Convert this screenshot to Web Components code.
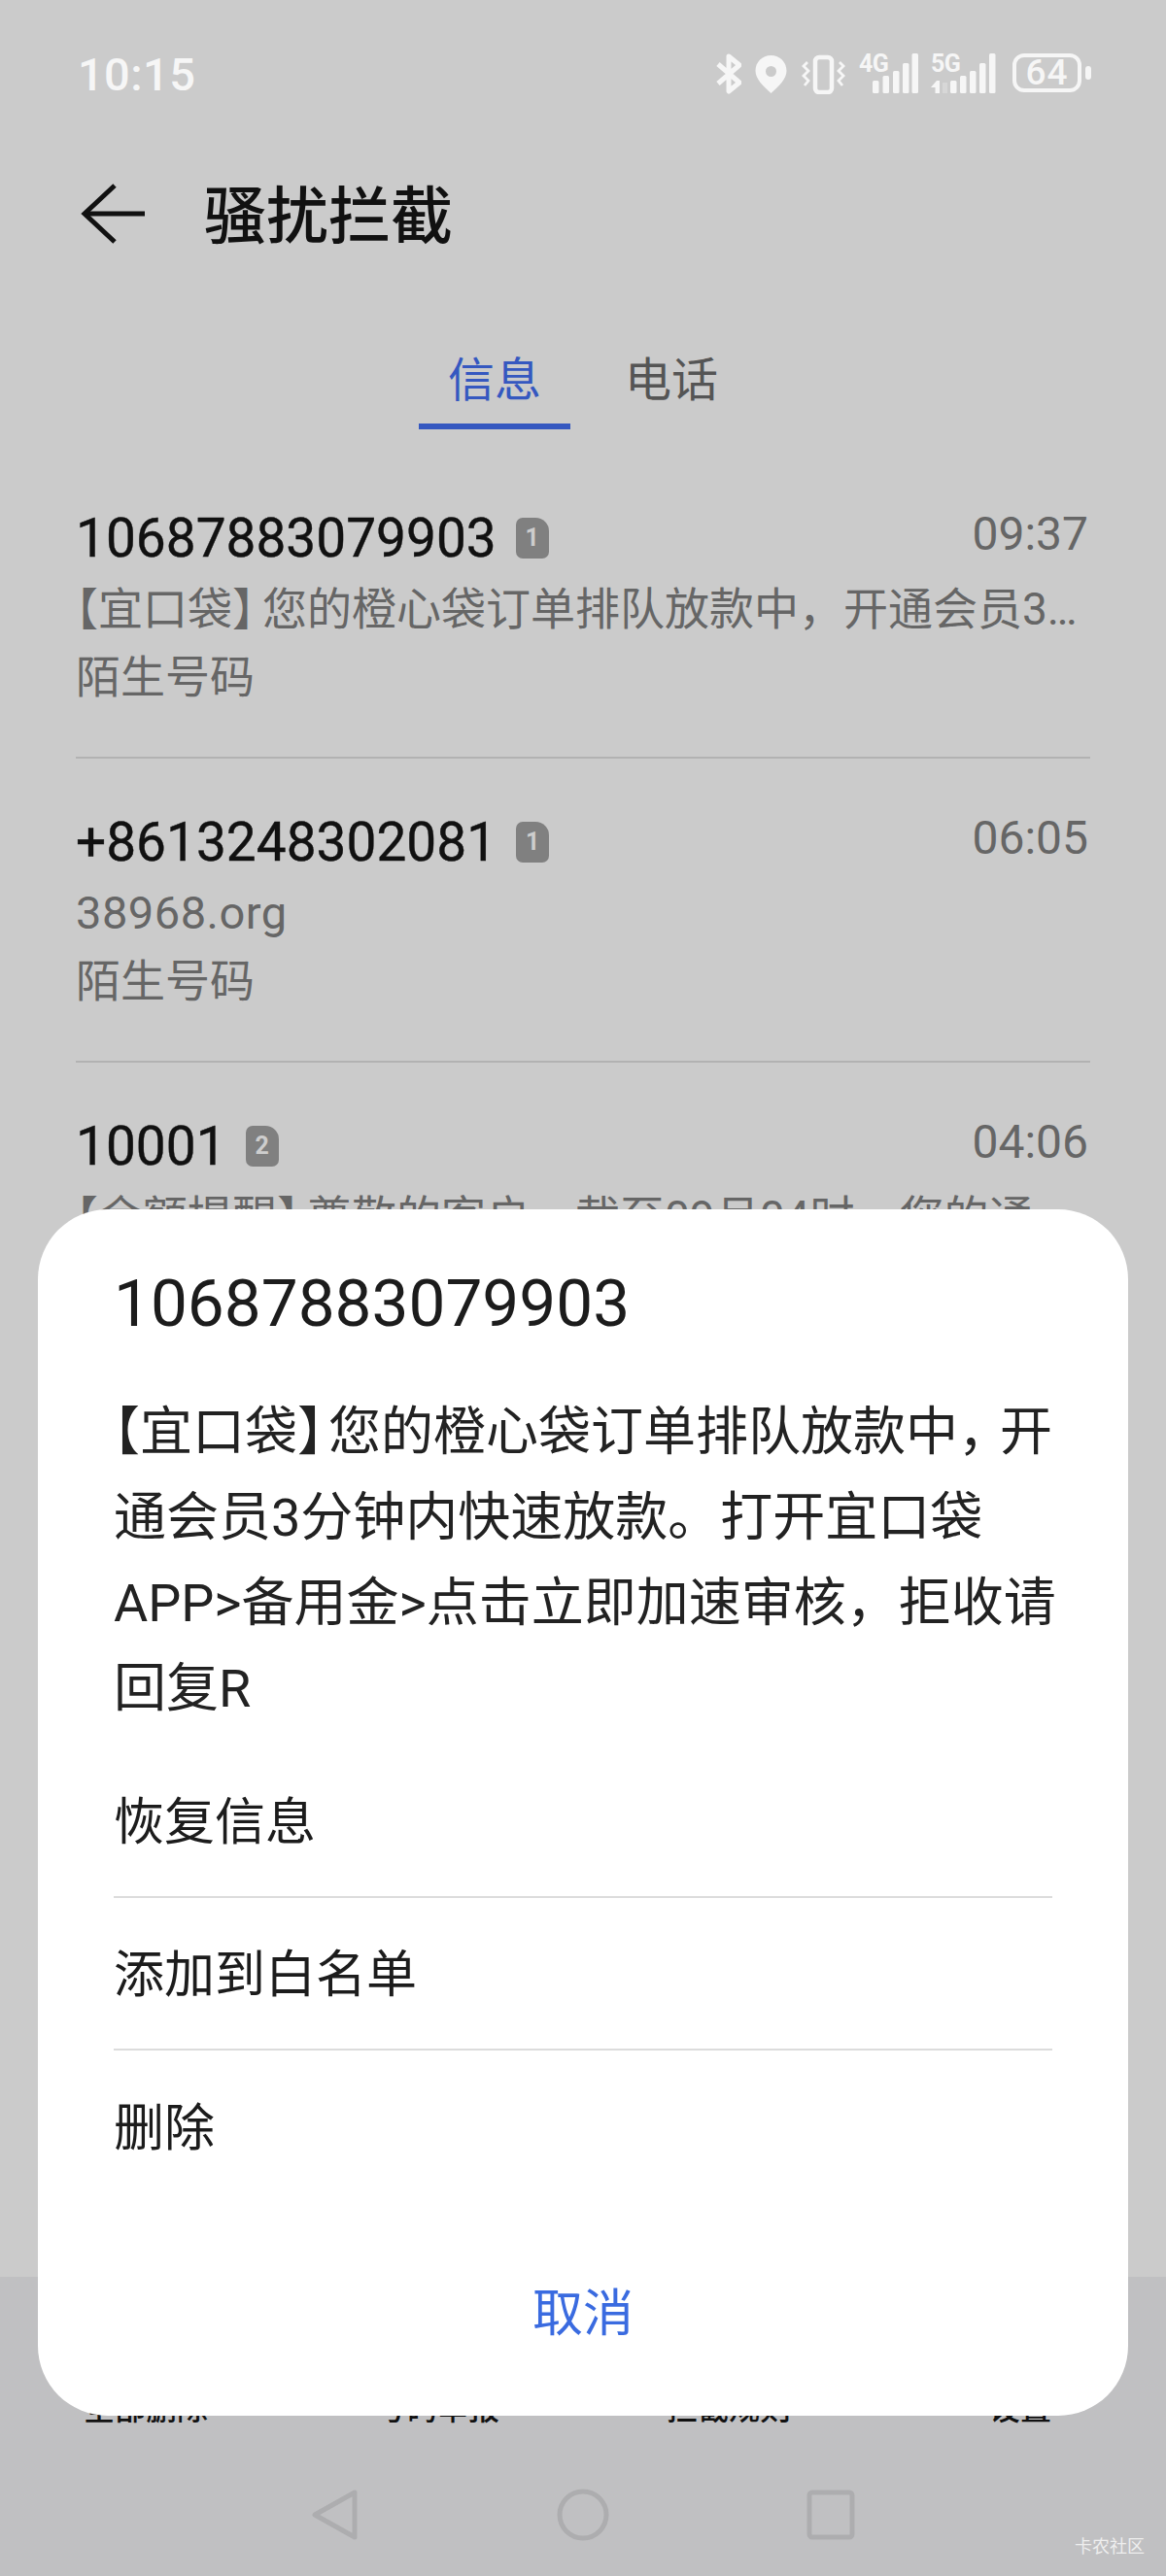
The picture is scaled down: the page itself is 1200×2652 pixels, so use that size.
<!DOCTYPE html>
<html lang="zh-CN"><head><meta charset="utf-8"><title>骚扰拦截</title>
<style>
html,body{margin:0;padding:0;background:#cbcbcb}
body{font-family:Roboto,"Noto Sans CJK SC",sans-serif;width:1200px;height:2652px;overflow:hidden}
message-row .ob,action-sheet .ob{font-feature-settings:"halt"}
message-row .cb{font-feature-settings:"halt";padding-right:8px}
message-row .lat{font-size:47px;letter-spacing:.5px}
action-sheet .cb{font-feature-settings:"halt";padding-right:5px}
action-sheet .cm{font-feature-settings:"halt";padding-right:16px}
action-sheet .ln{display:block;white-space:nowrap}
</style></head><body>
<blocked-screen>
  <status-bar slot="top"></status-bar>
  <app-header slot="top">骚扰拦截</app-header>
  <tab-strip slot="top"></tab-strip>
  <message-row name="10687883079903" badge="1" time="09:37" tag="陌生号码"><span class="ob">【</span>宜口袋<span class="cb">】</span>您的橙心袋订单排队放款中，开通会员3…</message-row>
  <message-row name="+8613248302081" badge="1" time="06:05" tag="陌生号码"><span class="lat">38968.org</span></message-row>
  <message-row name="10001" badge="2" time="04:06" tag="陌生号码"><span class="ob">【</span>余额提醒<span class="cb">】</span>尊敬的客户，截至09月04时，您的通…</message-row>
  <bottom-bar slot="bottom"></bottom-bar>
  <action-sheet slot="over" title="10687883079903"><span class="ln"><span class="ob">【</span>宜口袋<span class="cb">】</span>您的橙心袋订单排队放款中<span class="cm">，</span>开</span><span class="ln">通会员3分钟内快速放款。打开宜口袋</span><span class="ln">APP&gt;备用金&gt;点击立即加速审核，拒收请</span><span class="ln">回复R</span></action-sheet>
</blocked-screen>
<script>
function def(name, css, html){
  customElements.define(name, class extends HTMLElement{
    connectedCallback(){
      if(this.shadowRoot) return;
      const r=this.attachShadow({mode:'open'});
      const h=typeof html==='function'?html(this):html;
      r.innerHTML='<style>'+css+'</style>'+h;
    }
  });
}
def('blocked-screen',`
:host{display:block;position:relative;width:1200px;height:2652px;overflow:hidden;background:#cbcbcb}
.col{display:flex;flex-direction:column;height:2652px}
.list{display:block;padding-top:26px;height:1902px;overflow:hidden;box-sizing:border-box}
`,`<div class="col"><slot name="top"></slot><div class="list"><slot></slot></div><slot name="bottom"></slot></div><slot name="over"></slot>`);

def('status-bar',`
:host{display:flex;justify-content:space-between;align-items:flex-start;box-sizing:border-box;height:165px;padding:55px 77px 0 80px;color:#f6f6f6}
.time{font:500 47px/44px Roboto,sans-serif;letter-spacing:.4px}
.icons{display:flex;align-items:flex-start;font-family:Roboto,sans-serif}
svg{display:block}
.net{position:relative;display:block}
.net b{position:absolute;left:0;top:0;font:700 25px/22px Roboto,sans-serif;letter-spacing:-.5px}
.bat{display:flex;align-items:center;gap:4px;margin-left:17px}
.shell{box-sizing:border-box;width:71px;height:40px;border:4px solid #f6f6f6;border-radius:12px;display:flex;align-items:center;justify-content:center;font:500 37px/32px Roboto,sans-serif;letter-spacing:1px}
.tip{width:6px;height:14px;border-radius:3px;background:#f6f6f6}
`,()=>{
 const bars=(xs)=>{const ys=[28,23,18,10,0];return xs.map((x,i)=>`<rect x="${x}" y="${ys[i]}" width="6.5" height="${41-ys[i]}" rx="1.5" fill="#f6f6f6"/>`).join('')};
 return `<span class="time">10:15</span><div class="icons">
 <svg style="margin-right:14px" width="26" height="42" viewBox="0 0 26 42" fill="none" stroke="#f6f6f6" stroke-width="5" stroke-linejoin="round"><path d="M2 11 L24 30 L13 39 V3 L24 12 L2 31"/></svg>
 <svg style="margin-right:15px" width="33" height="42" viewBox="0 0 33 42"><path fill="#f6f6f6" fill-rule="evenodd" d="M16.5 2C7.5 2 0.5 8.800 0.500 18c0 8 8 16 16 23 8-7 16-15 16-23C32.500 8.800 25.500 2 16.500 2Zm0 11a5.500 5.500 0 1 1 0 11a5.500 5.500 0 0 1 0-11Z"/></svg>
 <svg style="margin-right:14px" width="45" height="42" viewBox="0 0 45 42" fill="none" stroke="#f6f6f6"><rect x="14" y="4" width="17" height="36" rx="4" stroke-width="4.500"/><path stroke-width="2.800" d="M6 9 L2 13 L7 18 L2 23 L7 28 L3 33"/><path stroke-width="2.800" d="M39 9 L43 13 L38 18 L43 23 L38 28 L42 33"/></svg>
 <span class="net" style="margin-right:13px;width:61px;height:42px"><b>4G</b><svg width="61" height="42" viewBox="0 0 61 42">${bars([14,24.5,35,45,54.5])}</svg></span>
 <span class="net" style="width:67px;height:42px"><b>5G</b><svg width="67" height="42" viewBox="0 0 67 42"><path fill="#f6f6f6" d="M6 28 L0 35 H4.500 V41 H9 V28Z"/><rect x="12" y="30" width="5" height="11" fill="#f6f6f6" opacity=".3"/>${bars([20,30,40,50,60])}</svg></span>
 <span class="bat"><span class="shell">64</span><span class="tip"></span></span>
 </div>`;
});

def('app-header',`
:host{display:flex;align-items:center;box-sizing:border-box;height:110px;padding-left:83px;color:#111}
svg{display:block;margin-right:55px}
.t{font:500 64px/80px "Noto Sans CJK SC",sans-serif;padding-bottom:6px}
`,`<svg width="72" height="64" viewBox="0 0 72 64" fill="none" stroke="#111" stroke-width="5"><path d="M35 3 L4 32 L35 61" stroke-linejoin="miter"/><path d="M4 32 H66"/></svg><span class="t"><slot></slot></span>`);

def('tab-strip',`
:host{display:flex;justify-content:center;gap:26px;align-items:flex-end;box-sizing:border-box;height:167px;font:400 48px/60px "Noto Sans CJK SC",sans-serif;color:#555}
.tab{width:156px;text-align:center;box-sizing:border-box;height:85px;border-bottom:6px solid transparent}
.on{color:#3558c0;border-color:#3558c0}
`,`<div class="tab on">信息</div><div class="tab">电话</div>`);

def('message-row',`
:host{display:block;box-sizing:border-box;height:313px;margin:0 78px;padding:56px 2px 0 0;border-bottom:2px solid #b2b2b2;color:#666}
.top{display:flex;justify-content:space-between;align-items:flex-start;height:60px}
.n{display:flex;align-items:center;color:#111;font:400 55px/60px Roboto,sans-serif;-webkit-text-stroke:.4px #111}
.badge{margin-left:20px;width:34px;height:42px;border-radius:7px 14px 7px 7px;background:#808080;color:#cdcdcd;font:700 25px/42px Roboto,sans-serif;text-align:center;-webkit-text-stroke:0}
.time{font:400 48px/52px Roboto,sans-serif}
.p{margin-top:8px;font:400 46px/70px Roboto,"Noto Sans CJK SC",sans-serif;white-space:nowrap;overflow:hidden}
`,(e)=>`<div class="top"><div class="n">${e.getAttribute('name')}<span class="badge">${e.getAttribute('badge')}</span></div><div class="time">${e.getAttribute('time')}</div></div><div class="p"><slot></slot></div><div class="p" style="margin-top:0">${e.getAttribute('tag')}</div>`);

def('bottom-bar',`
:host{display:block;position:relative;box-sizing:border-box;height:308px;background:#c0c0c2;padding-top:113px}
.labels{display:grid;grid-template-columns:repeat(4,1fr);font:500 32px/40px "Noto Sans CJK SC",sans-serif;color:#111;text-align:center}
.nav{display:grid;grid-template-columns:repeat(3,255px);justify-content:center;justify-items:center;margin-top:64px}
svg{display:block}
.wm{position:absolute;right:22px;bottom:20px;font:400 18px/24px "Noto Sans CJK SC",sans-serif;color:#eee}
`,`<div class="labels"><span>全部删除</span><span>号码举报</span><span>拦截规则</span><span>设置</span></div>
<div class="nav">
<svg width="50" height="56" viewBox="0 0 50 56" fill="none" stroke="#adadaf" stroke-width="5" stroke-linejoin="round"><path d="M45 5 V51 L4 28 Z"/></svg>
<svg width="56" height="56" viewBox="0 0 56 56" fill="none" stroke="#adadaf" stroke-width="5"><circle cx="28" cy="28" r="24"/></svg>
<svg width="50" height="56" viewBox="0 0 50 56" fill="none" stroke="#adadaf" stroke-width="5"><rect x="3" y="5" width="44" height="46" rx="3"/></svg>
</div><span class="wm">卡农社区</span>`);

def('action-sheet',`
:host{display:block;position:absolute;left:39px;top:1245px;width:1122px;height:1242px;box-sizing:border-box;padding:57px 78px 0;background:#fff;border-radius:72px;color:#1c1c1c;font-family:Roboto,"Noto Sans CJK SC",sans-serif}
.h{font:400 67.500px/80px Roboto,sans-serif}
.b{margin-top:49px;font-size:54px;line-height:88px;color:#222}
.rows{margin-top:14px}
.r{box-sizing:border-box;height:157px;padding-bottom:6px;display:flex;align-items:center;font-size:52px;border-bottom:2px solid #dcdcdc}
.r:last-child{border-bottom:0}
.c{margin-top:75px;text-align:center;font-size:52px;line-height:80px;color:#3a6be0}
`,(e)=>`<div class="h">${e.getAttribute('title')}</div><div class="b"><slot></slot></div><div class="rows"><div class="r">恢复信息</div><div class="r">添加到白名单</div><div class="r">删除</div></div><div class="c">取消</div>`);
</script>
</body></html>
